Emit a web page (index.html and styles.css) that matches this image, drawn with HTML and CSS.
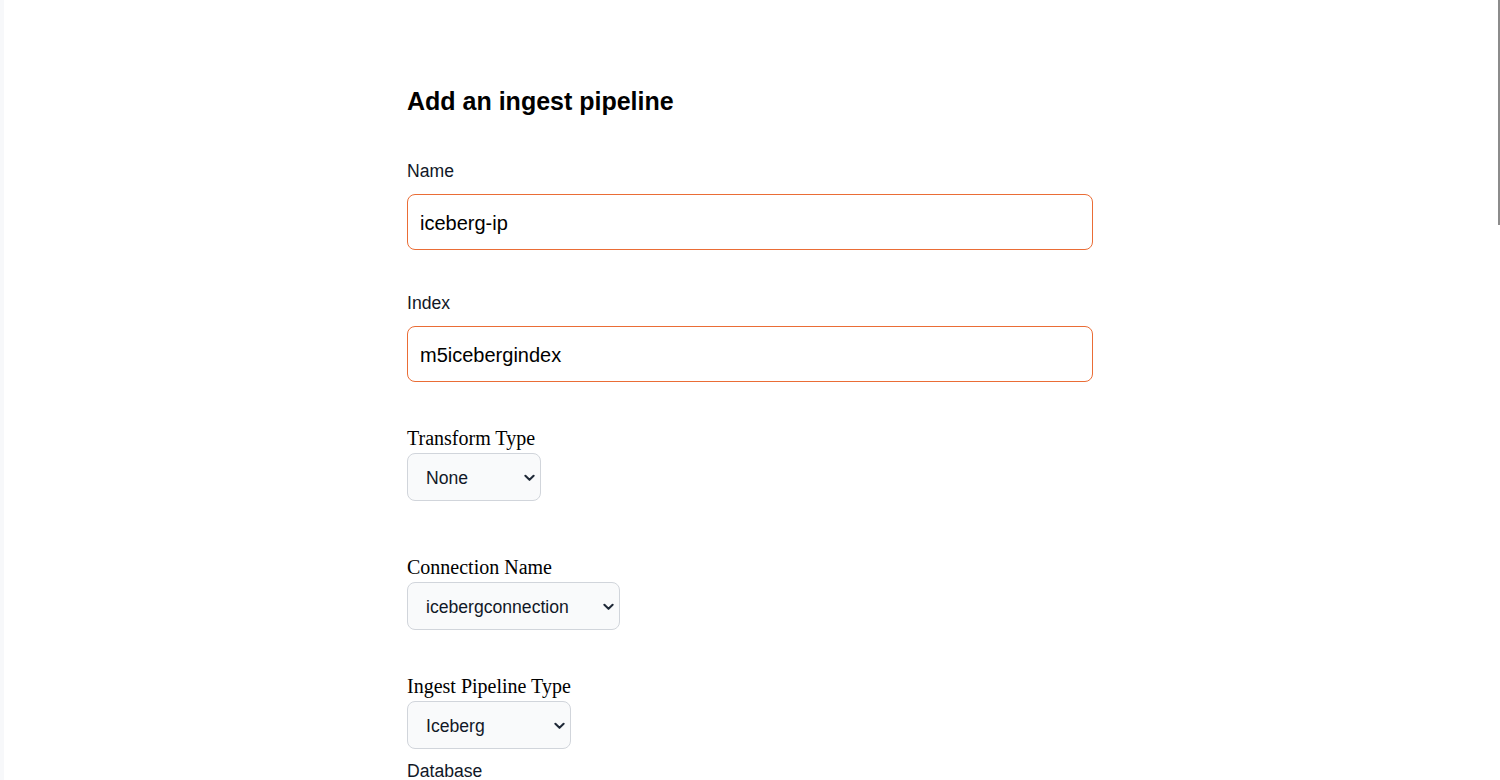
FILE: index.html
```html
<!DOCTYPE html>
<html lang="en">

<head>
  <meta charset="UTF-8">
  <meta name="viewport" content="width=device-width, initial-scale=1.0">
  <title>Add an ingest pipeline</title>
  <link rel="stylesheet" href="styles.css">
</head>

<body>
  <div class="scroll-thumb" aria-hidden="true"></div>

  <form action="#" class="pipeline-form">
    <h2>Add an ingest pipeline</h2>

    <div class="field">
      <label for="name">Name</label>
      <input type="text" id="name" class="text-input" value="iceberg-ip">
    </div>

    <div class="field">
      <label for="index">Index</label>
      <input type="text" id="index" class="text-input" value="m5icebergindex">
    </div>

    <div class="choice choice-first">
      <label for="transform">Transform Type</label>
      <div class="select-wrap select-transform">
        <select id="transform">
          <option>None</option>
          <option>Script</option>
        </select>
        <svg class="chevron" viewBox="0 0 12 8" aria-hidden="true">
          <path d="M1.5 1.5 6 6l4.5-4.5" />
        </svg>
      </div>
    </div>

    <div class="choice">
      <label for="connection">Connection Name</label>
      <div class="select-wrap select-connection">
        <select id="connection">
          <option>icebergconnection</option>
        </select>
        <svg class="chevron" viewBox="0 0 12 8" aria-hidden="true">
          <path d="M1.5 1.5 6 6l4.5-4.5" />
        </svg>
      </div>
    </div>

    <div class="choice choice-last">
      <label for="pipelineType">Ingest Pipeline Type</label>
      <div class="select-wrap select-type">
        <select id="pipelineType">
          <option>Iceberg</option>
          <option>Kafka</option>
          <option>S3</option>
        </select>
        <svg class="chevron" viewBox="0 0 12 8" aria-hidden="true">
          <path d="M1.5 1.5 6 6l4.5-4.5" />
        </svg>
      </div>
    </div>

    <div class="field">
      <label for="database">Database</label>
      <input type="text" id="database" class="text-input">
    </div>
  </form>
</body>

</html>
```

FILE: styles.css
```css
html {
  overflow: hidden;
}

body {
  margin: 0;
  height: 100vh;
  background: linear-gradient(to right, #f7f8fa 4px, #ffffff 4px);
  font-family: "Liberation Sans", Arial, Helvetica, sans-serif;
  color: #111827;
}

.scroll-thumb {
  position: fixed;
  top: 0;
  right: 0;
  width: 2px;
  height: 225px;
  background-color: #8c8c8c;
}

.pipeline-form {
  width: 686px;
  margin: 0 auto;
  padding-top: 85px;
}

.pipeline-form h2 {
  margin: 0 0 42px;
  font-size: 25px;
  line-height: 32px;
  font-weight: bold;
  color: #000;
}

.field {
  margin-bottom: 41px;
}

.field label {
  display: block;
  font-size: 17.6px;
  line-height: 24px;
  margin-bottom: 11px;
}

.text-input {
  display: block;
  box-sizing: border-box;
  width: 100%;
  height: 56px;
  padding: 16px 12px 14px;
  border: 1px solid #ea6d36;
  border-radius: 8px;
  font-family: inherit;
  font-size: 20px;
  line-height: 24px;
  color: #000;
  background-color: #fff;
  outline: none;
}

.choice {
  margin-bottom: 45px;
}

.choice-first {
  margin-top: 45px;
  margin-bottom: 55px;
}

.choice-last {
  margin-bottom: 10px;
}

.choice-last + .field label {
  margin-bottom: 8px;
}

.choice label {
  display: block;
  font-family: "Liberation Serif", "Times New Roman", serif;
  font-size: 20px;
  line-height: 23px;
  margin-bottom: 3px;
  color: #000;
}

.select-wrap {
  position: relative;
  width: 134px;
}

.select-connection {
  width: 213px;
}

.select-type {
  width: 164px;
}

.select-wrap select {
  display: block;
  box-sizing: border-box;
  width: 100%;
  height: 48px;
  padding: 2px 30px 0 18px;
  appearance: none;
  border: 1px solid #d1d5db;
  border-radius: 8px;
  background-color: #f9fafb;
  font-family: "Liberation Sans", Arial, sans-serif;
  font-size: 17.6px;
  color: #111827;
}

.chevron {
  position: absolute;
  right: 6px;
  top: 21px;
  width: 11px;
  height: 8px;
  pointer-events: none;
  fill: none;
  stroke: #1f2937;
  stroke-width: 2.2;
  stroke-linecap: round;
  stroke-linejoin: round;
}
```
